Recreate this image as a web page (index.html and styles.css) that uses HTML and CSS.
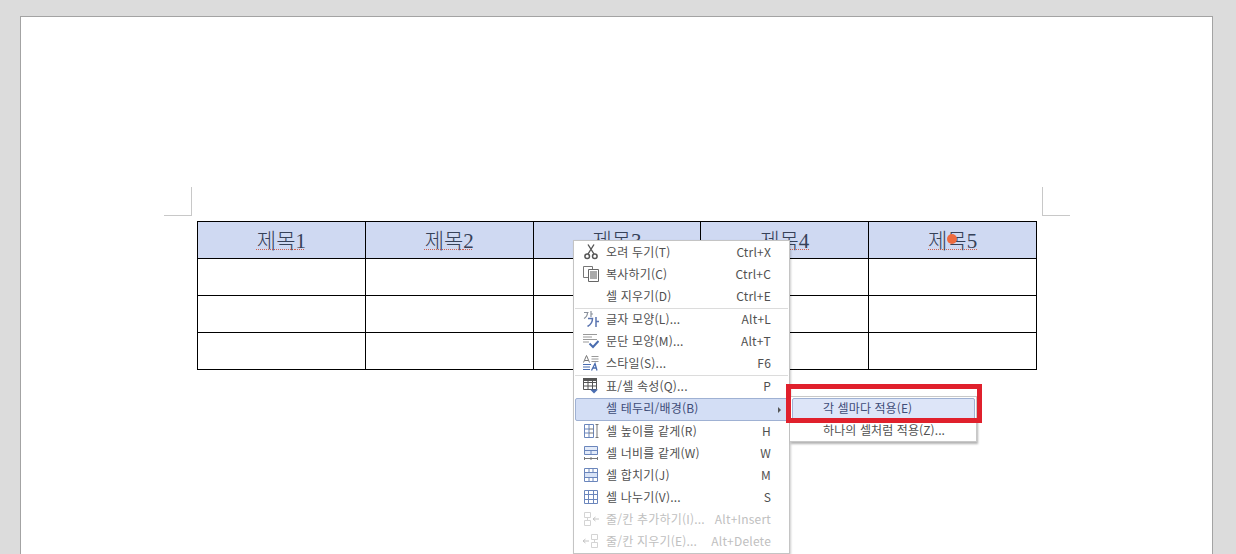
FILE: index.html
```html
<!DOCTYPE html>
<html lang="ko">
<head>
<meta charset="utf-8">
<title>표 셀 테두리/배경</title>
<link rel="stylesheet" href="styles.css">
</head>
<body>
<main class="paper">
  <div class="body-area">
    <span class="crop crop-left"></span>
    <span class="crop crop-right"></span>
    <table class="doc-table">
      <tr class="head">
        <td><span class="title"><span class="han">제목</span>1</span></td>
        <td><span class="title"><span class="han">제목</span>2</span></td>
        <td><span class="title"><span class="han">제목</span>3</span></td>
        <td><span class="title"><span class="han">제목</span>4</span></td>
        <td><span class="title"><span class="han">제목</span>5</span></td>
      </tr>
      <tr><td></td><td></td><td></td><td></td><td></td></tr>
      <tr><td></td><td></td><td></td><td></td><td></td></tr>
      <tr><td></td><td></td><td></td><td></td><td></td></tr>
    </table>
  </div>
</main>

<span class="pointer-dot"></span>

<nav class="menu">
  <div class="item"><svg class="ico" viewBox="0 0 16 16"><path d="M5 .5l6 9.500M11 .5L5 10" fill="none" stroke="#555" stroke-width="1.400"/><circle cx="4.200" cy="12.300" r="2.300" fill="none" stroke="#555" stroke-width="1.500"/><circle cx="11.800" cy="12.300" r="2.300" fill="none" stroke="#555" stroke-width="1.500"/></svg><span class="label">오려 두기(T)</span><span class="key">Ctrl+X</span></div>
  <div class="item"><svg class="ico" viewBox="0 0 16 16"><path d="M.5 .5h9v11h-9z" fill="#fff" stroke="#777"/><path d="M5.500 3.500h10v12h-10z" fill="#fff" stroke="#666"/><path d="M7 6h7M7 8h7M7 10h7M7 12h7" stroke="#555"/></svg><span class="label">복사하기(C)</span><span class="key">Ctrl+C</span></div>
  <div class="item"><span class="ico"></span><span class="label">셀 지우기(D)</span><span class="key">Ctrl+E</span></div>
  <div class="sep"></div>
  <div class="item"><svg class="ico" viewBox="0 0 16 16"><path d="M1 1.500h4.500M4.500 1.500C4.500 4 3.500 6 1 7.500M8 0v6M8 3h2" fill="none" stroke="#8a919c" stroke-width="1.200"/><path d="M5 7.500h4.500C9.500 10.500 8 13.500 4.500 15.500M13 6v10M13 10.500h3" fill="none" stroke="#5a74b0" stroke-width="1.500"/></svg><span class="label">글자 모양(L)...</span><span class="key">Alt+L</span></div>
  <div class="item"><svg class="ico" viewBox="0 0 16 16"><path d="M0 1.500h14M0 4h9M0 6.500h14M0 9h6" stroke="#999"/><path d="M6.500 10.500l3.500 3.500 5.500-6" fill="none" stroke="#4a6db0" stroke-width="2"/></svg><span class="label">문단 모양(M)...</span><span class="key">Alt+T</span></div>
  <div class="item"><svg class="ico" viewBox="0 0 16 16"><path d="M.5 7.500L3.500 .5l3 7M1.700 5.500h3.600" fill="none" stroke="#777"/><path d="M8.500 1.500h7M8.500 4h7M8.500 6.500h7" stroke="#999"/><path d="M0 9.500h8M0 12h7M0 14.500h7" stroke="#4a6db0"/><path d="M8.500 15.500l3.500-7 2 7M10 13h3.800" fill="none" stroke="#4a6db0" stroke-width="1.300"/></svg><span class="label">스타일(S)...</span><span class="key">F6</span></div>
  <div class="sep"></div>
  <div class="item"><svg class="ico" viewBox="0 0 16 16"><path d="M0 0h14v3H0z" fill="#555"/><path d="M.5 .5h13v11H.5zM.5 4.500h13M.5 8h13M5 .5v11M9.500 .5v11" fill="none" stroke="#555"/><path d="M7 11.500l4 4 4-4z" fill="#4a6db0"/></svg><span class="label">표/셀 속성(Q)...</span><span class="key">P</span></div>
  <div class="item active"><span class="ico"></span><span class="label">셀 테두리/배경(B)</span><span class="arrow"></span></div>
  <div class="item"><svg class="ico" viewBox="0 0 16 16"><path d="M1.500 1.500h9v13h-9zM6 1.500v13M1.500 6h4.500M1.500 10h4.500" fill="none" stroke="#6b86bc"/><path d="M12.500 1.500h3M12.500 14.500h3M14 1.500v13M6 6h4.500M6 10h4.500" fill="none" stroke="#777"/></svg><span class="label">셀 높이를 같게(R)</span><span class="key">H</span></div>
  <div class="item"><svg class="ico" viewBox="0 0 16 16"><path d="M1.500 1.500h13v8h-13zM1.500 5.500h13M8 5.500v4" fill="#e3ebf9" stroke="#6b86bc"/><path d="M1.500 12v3M14.500 12v3M8 12v3M1.500 13.500h13" fill="none" stroke="#777"/></svg><span class="label">셀 너비를 같게(W)</span><span class="key">W</span></div>
  <div class="item"><svg class="ico" viewBox="0 0 16 16"><path d="M1.500 1.500h13v13h-13z" fill="#fff" stroke="#6b86bc"/><path d="M2 6h12v4H2z" fill="#d8e3f6"/><path d="M1.500 5.500h13M1.500 10.500h13M6 1.500v4M10 1.500v4M6 10.500v4M10 10.500v4" fill="none" stroke="#6b86bc"/></svg><span class="label">셀 합치기(J)</span><span class="key">M</span></div>
  <div class="item"><svg class="ico" viewBox="0 0 16 16"><path d="M1.500 1.500h13v13h-13zM1.500 5.500h13M1.500 10.500h13M5.500 1.500v13M10.500 1.500v13" fill="#fff" stroke="#6b86bc"/></svg><span class="label">셀 나누기(V)...</span><span class="key">S</span></div>
  <div class="item disabled"><svg class="ico" viewBox="0 0 16 16"><path d="M1.500 1.500h6v5h-6zM1.500 9.500h6v5h-6zM4.500 6.500v3" fill="none" stroke="#d4d4d4"/><path d="M10 8h6M10 8l2.500-2M10 8l2.500 2" fill="none" stroke="#c4c4c4"/></svg><span class="label">줄/칸 추가하기(I)...</span><span class="key">Alt+Insert</span></div>
  <div class="item disabled"><svg class="ico" viewBox="0 0 16 16"><path d="M8.500 1.500h6v5h-6zM8.500 9.500h6v5h-6zM11.500 6.500v3" fill="none" stroke="#d4d4d4"/><path d="M0 8h6M0 8l2.500-2M0 8l2.500 2" fill="none" stroke="#c4c4c4"/></svg><span class="label">줄/칸 지우기(E)...</span><span class="key">Alt+Delete</span></div>
</nav>

<nav class="submenu">
  <div class="subitem active"><span class="subtext">각 셀마다 적용(E)</span></div>
  <div class="subitem"><span class="subtext">하나의 셀처럼 적용(Z)...</span></div>
</nav>
<div class="highlight"></div>
</body>
</html>
```
FILE: styles.css
```css
* { box-sizing: border-box; }

html, body {
  margin: 0;
  height: 100%;
  overflow: hidden;
}

body {
  background: #dcdcdc;
  font-family: "Noto Sans CJK KR", "Noto Sans", sans-serif;
  padding: 16px 23px 0 20px;
}

.paper {
  background: #fff;
  border: 1px solid #a3a3a3;
  border-bottom: 0;
  height: 538px;
  padding: 204px 175px 0 176px;
}

.body-area { position: relative; }

.crop {
  position: absolute;
  top: -34px;
  width: 28px;
  height: 29px;
  border-bottom: 1px solid #c8c8c8;
}

.crop-left {
  left: -33px;
  border-right: 1px solid #c8c8c8;
}

.crop-right {
  right: -33px;
  border-left: 1px solid #c8c8c8;
}

.doc-table {
  border-collapse: collapse;
  table-layout: fixed;
  width: 840px;
}

.doc-table td {
  border: 1px solid #000;
  height: 37px;
  padding: 0;
  text-align: center;
}

.head td {
  background: #cfd9f2;
  color: #364158;
  font-family: "Liberation Serif", "Noto Sans CJK KR", serif;
  font-size: 21px;
  line-height: 1;
}

.title {
  text-decoration: underline dotted #d0604c 1px;
  text-underline-offset: 1px;
}

.han {
  font-family: "Noto Sans CJK KR", sans-serif;
  font-size: 21px;
  font-weight: 300;
}

.pointer-dot {
  position: absolute;
  left: 947px;
  top: 234px;
  width: 10px;
  height: 10px;
  border-radius: 50%;
  background: #ee6a3e;
}

.menu {
  position: absolute;
  left: 573px;
  top: 240px;
  width: 217px;
  height: 314px;
  background: #fff;
  border: 1px solid #c4c4c4;
  padding: 1px;
  box-shadow: 1px 1px 2px rgba(0, 0, 0, 0.2);
  color: #505050;
  font-size: 12px;
  letter-spacing: 0.2px;
}

.item {
  display: flex;
  align-items: center;
  height: 22px;
  padding: 0 17px 0 8px;
}

.ico {
  display: block;
  flex: none;
  width: 16px;
  height: 16px;
  margin: 0 7px 2px 0;
}

.label,
.key {
  padding-bottom: 4px;
  white-space: nowrap;
}

.label { flex: 1; }

.sep {
  height: 1px;
  background: #dcdcdc;
}

.item.active {
  background: #d3def5;
  border: 1px solid #9fb1d3;
  border-radius: 2px;
  color: #3f4d78;
  height: 23px;
  padding: 0 6px 0 7px;
}

.arrow {
  width: 0;
  height: 0;
  border-left: 3px solid #555;
  border-top: 3px solid transparent;
  border-bottom: 3px solid transparent;
}

.item.disabled { color: #c0c0c0; }

.submenu {
  position: absolute;
  left: 790px;
  top: 396px;
  width: 187px;
  height: 46px;
  background: #fff;
  border: 1px solid #c8c8c8;
  border-left: 0;
  padding-top: 1px;
  box-shadow: 1px 2px 2px rgba(0, 0, 0, 0.3);
  color: #505050;
  font-size: 12px;
  letter-spacing: 0.1px;
}

.subitem {
  display: flex;
  align-items: center;
  height: 22px;
  padding-left: 33px;
  white-space: nowrap;
}

.subtext { padding-bottom: 4px; }

.subitem.active {
  background: #dde5f8;
  border: 1px solid #9fb1d3;
  border-radius: 2px;
  margin: 0 1px 0 2px;
  padding-left: 30px;
  color: #3f4d78;
}

.highlight {
  position: absolute;
  left: 786px;
  top: 384px;
  width: 196px;
  height: 39px;
  border: 5px solid #e0202c;
}
```
